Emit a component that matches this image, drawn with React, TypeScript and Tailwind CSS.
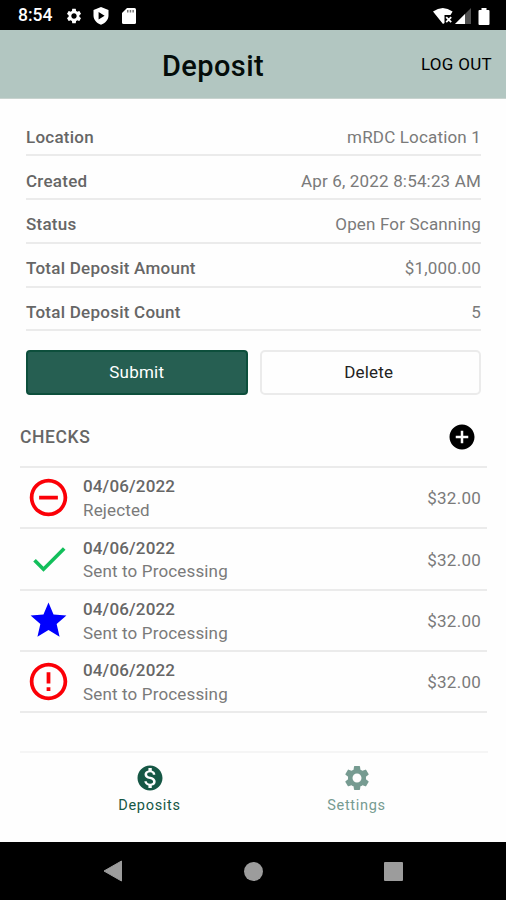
import type { ReactNode } from 'react';
import {
  MdAddCircle,
  MdCheck,
  MdErrorOutline,
  MdMonetizationOn,
  MdRemoveCircleOutline,
  MdSettings,
  MdStar,
} from 'react-icons/md';

const details = [
  { label: 'Location', value: 'mRDC Location 1' },
  { label: 'Created', value: 'Apr 6, 2022 8:54:23 AM' },
  { label: 'Status', value: 'Open For Scanning' },
  { label: 'Total Deposit Amount', value: '$1,000.00' },
  { label: 'Total Deposit Count', value: '5' },
];

const checks: { icon: ReactNode; status: string }[] = [
  { icon: <MdRemoveCircleOutline size={45} className="text-[#fb0007]" />, status: 'Rejected' },
  { icon: <MdCheck size={44} className="text-[#12bf5b]" />, status: 'Sent to Processing' },
  { icon: <MdStar size={43} className="text-[#0000fe]" />, status: 'Sent to Processing' },
  { icon: <MdErrorOutline size={45} className="text-[#fb0007]" />, status: 'Sent to Processing' },
];

function StatusBar() {
  return (
    <div className="flex h-[30px] items-center bg-black pt-[2px] pl-[18px] text-white">
      <span className="w-[47px] text-[17.5px] leading-none font-medium">8:54</span>
      <MdSettings size={18} />
      <svg viewBox="0 0 16 18" className="ml-[10px] h-[18px] w-[16px]">
        <path
          fillRule="evenodd"
          fill="currentColor"
          d="M8 0 15.5 3v5.500c0 4.200-3 7.600-7.500 9.200C3.500 16.100.5 12.700.5 8.500V3zM5.600 5v7.400L11.600 8.700z"
        />
      </svg>
      <svg viewBox="0 0 14 16" className="ml-[13px] h-4 w-[14px]">
        <path
          fill="currentColor"
          d="M5 0h7.500Q14 0 14 1.500v13q0 1.500-1.500 1.500h-11Q0 16 0 14.500V5z"
        />
        <path fill="#777777" d="M5 2h1.500v2.600H5zM7.700 2h1.500v2.600H7.700zM10.400 2h1.500v2.600h-1.500z" />
      </svg>
      <div className="ml-auto flex items-center pr-[16px]">
        <svg viewBox="0 0 20 16" className="h-4 w-5">
          <path fill="currentColor" d="M0 3.600Q9.800-3.600 19.600 3.600L17.500 7H11.500V15L10 16z" />
          <path stroke="currentColor" strokeWidth="1.800" d="m13.200 9.200 5 5m0-5-5 5" />
        </svg>
        <svg viewBox="0 0 16 16" className="ml-[2px] h-4 w-4">
          <path fill="#505050" d="M16 0v16H0z" />
          <path fill="currentColor" d="M10 6v10H0z" />
        </svg>
        <svg viewBox="0 0 12 17" className="ml-[7px] h-[17px] w-3">
          <path
            fill="currentColor"
            d="M3.500 0h5v2h2Q11.500 2 11.500 3v13q0 1-1 1h-9q-1 0-1-1V3q0-1 1-1h2z"
          />
        </svg>
      </div>
    </div>
  );
}

function Header() {
  return (
    <header className="flex h-[69px] items-center justify-between border-b border-[#c8d3cf] bg-[#b2c6c1] pr-[14px] pl-[162px] text-black">
      <h1 className="pt-1 text-[29px] leading-none font-medium tracking-[0.4px] text-[#040c0a]">
        Deposit
      </h1>
      <button className="pt-px text-[17px] leading-none tracking-[0.3px]">LOG OUT</button>
    </header>
  );
}

function NavTab({ icon, label, color }: { icon: ReactNode; label: string; color: string }) {
  return (
    <div className={`flex w-[207px] flex-col items-center pt-[10px] ${color}`}>
      {icon}
      <span className="mt-[3px] text-[14.500px] leading-[20px] tracking-[0.7px]">{label}</span>
    </div>
  );
}

export default function App() {
  return (
    <div className="flex h-[900px] w-[506px] flex-col overflow-hidden bg-[#fefefe] font-['Roboto',sans-serif] text-[#7a7a7a]">
      <StatusBar />
      <Header />

      <section className="pr-[25px] pl-[26px] pt-[13.800px]">
        {details.map((d) => (
          <div
            key={d.label}
            className="flex h-[43.700px] items-end justify-between border-b-2 border-[#ebebeb] pb-[7.500px] text-[17px] leading-[20px]"
          >
            <span className="font-medium tracking-[0.25px] text-[#666666]">{d.label}</span>
            <span className="tracking-[0.17px]">{d.value}</span>
          </div>
        ))}
      </section>

      <div className="mt-[18.700px] grid grid-cols-2 gap-[12px] pr-[25px] pl-[26px] text-[17px] tracking-[0.2px]">
        <button className="h-[45px] rounded-[4px] border-2 border-[#0d4f3c] bg-[#265f52] text-white">
          Submit
        </button>
        <button className="h-[45px] rounded-[5px] border-2 border-[#ebebeb] pr-[3px] text-[#222222]">
          Delete
        </button>
      </div>

      <section className="mr-[19px] ml-5 mt-[12px]">
        <div className="flex h-[61px] items-center justify-between border-b-2 border-[#ebebeb] pt-px pr-[10px]">
          <h2 className="pt-px text-[17.500px] font-medium tracking-[0.600px] text-[#666666]">CHECKS</h2>
          <MdAddCircle size={30} className="text-black" />
        </div>
        {checks.map((c, i) => (
          <div key={i} className="flex h-[61.300px] items-center border-b-2 border-[#ebebeb] pr-[6px]">
            <div className="flex w-[57px] justify-center">{c.icon}</div>
            <div className="ml-[6px] flex-1 pt-[3px] text-[17px] leading-[23.700px]">
              <div className="font-medium tracking-[0.15px] text-[#666666]">04/06/2022</div>
              <div className="tracking-[0.15px]">{c.status}</div>
            </div>
            <span className="pt-[3px] text-[17px] tracking-[0.250px]">$32.00</span>
          </div>
        ))}
      </section>

      <nav className="mr-[18px] ml-5 mt-auto flex h-[91px] border-t-2 border-[#f5f5f5] pl-[26px]">
        <NavTab icon={<MdMonetizationOn size={30} />} label="Deposits" color="text-[#165745]" />
        <NavTab icon={<MdSettings size={30} />} label="Settings" color="text-[#769b91]" />
      </nav>

      <footer className="flex h-[58px] items-center justify-center bg-black">
        <svg viewBox="0 0 20 22" className="mr-[121px] h-[22px] w-5">
          <path d="M1 11 18.500 1v20z" fill="#9c9c9c" stroke="#9c9c9c" strokeLinejoin="round" />
        </svg>
        <div className="h-[19px] w-[19px] rounded-full bg-[#9c9c9c]" />
        <div className="ml-[121px] h-[19px] w-[19px] rounded-[1px] bg-[#9c9c9c]" />
      </footer>
    </div>
  );
}
